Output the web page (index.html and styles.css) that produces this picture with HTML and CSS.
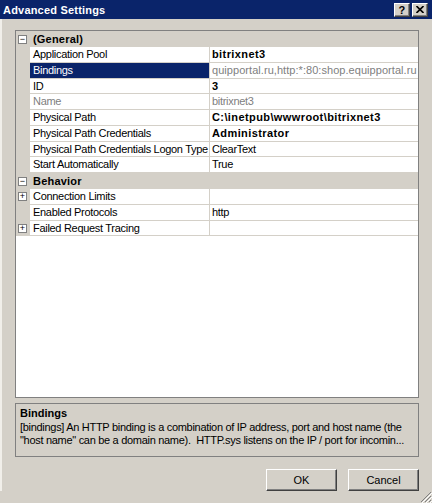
FILE: index.html
```html
<!DOCTYPE html>
<html lang="en">
<head>
    <meta charset="UTF-8">
    <title>Advanced Settings</title>
    <link rel="stylesheet" href="styles.css">
</head>
<body>

<div class="window">
    <!-- Barra de título -->
    <div class="titlebar">
        <span class="title">Advanced Settings</span>
        <span class="title-btn help">?</span>
        <span class="title-btn">
            <svg width="8" height="7" viewBox="0 0 8 7"><path d="M0.5 0 L7.5 7 M7.5 0 L0.5 7" stroke="#000" stroke-width="1.6"/></svg>
        </span>
    </div>

    <div class="content">
        <!-- Grade de propriedades -->
        <div class="grid">
            <div class="cat">
                <span class="gutter"><span class="box">&minus;</span></span>
                <span class="cat-name">(General)</span>
            </div>
            <div class="row">
                <span class="gutter"></span>
                <span class="label">Application Pool</span>
                <span class="value bold">bitrixnet3</span>
            </div>
            <div class="row">
                <span class="gutter"></span>
                <span class="label selected">Bindings</span>
                <span class="value muted wide">quipportal.ru,http:*:80:shop.equipportal.ru</span>
            </div>
            <div class="row">
                <span class="gutter"></span>
                <span class="label">ID</span>
                <span class="value bold">3</span>
            </div>
            <div class="row">
                <span class="gutter"></span>
                <span class="label muted">Name</span>
                <span class="value muted">bitrixnet3</span>
            </div>
            <div class="row">
                <span class="gutter"></span>
                <span class="label">Physical Path</span>
                <span class="value bold">C:\inetpub\wwwroot\bitrixnet3</span>
            </div>
            <div class="row">
                <span class="gutter"></span>
                <span class="label">Physical Path Credentials</span>
                <span class="value bold">Administrator</span>
            </div>
            <div class="row">
                <span class="gutter"></span>
                <span class="label">Physical Path Credentials Logon Type</span>
                <span class="value">ClearText</span>
            </div>
            <div class="row">
                <span class="gutter"></span>
                <span class="label">Start Automatically</span>
                <span class="value">True</span>
            </div>
            <div class="cat">
                <span class="gutter"><span class="box">&minus;</span></span>
                <span class="cat-name">Behavior</span>
            </div>
            <div class="row">
                <span class="gutter"><span class="box">+</span></span>
                <span class="label">Connection Limits</span>
                <span class="value"></span>
            </div>
            <div class="row">
                <span class="gutter"></span>
                <span class="label">Enabled Protocols</span>
                <span class="value">http</span>
            </div>
            <div class="row">
                <span class="gutter"><span class="box">+</span></span>
                <span class="label">Failed Request Tracing</span>
                <span class="value"></span>
            </div>
        </div>

        <!-- Descrição da propriedade -->
        <div class="desc">
            <div class="desc-title">Bindings</div>
            [bindings] An HTTP binding is a combination of IP address, port and host name (the<br>
            "host name" can be a domain name).&nbsp; HTTP.sys listens on the IP / port for incomin...
        </div>

        <div class="actions">
            <button class="btn">OK</button>
            <button class="btn">Cancel</button>
        </div>
    </div>

    <svg class="grip" width="12" height="12" viewBox="0 0 12 12">
        <path d="M11 1 L1 11 M11 5 L5 11 M11 9 L9 11" stroke="#808080" stroke-width="1"/>
        <path d="M12 2 L2 12 M12 6 L6 12 M12 10 L10 12" stroke="#fff" stroke-width="1"/>
    </svg>
</div>

</body>
</html>
```

FILE: styles.css
```css
body {
    margin: 0;
    background-color: #d4d0c8;
    font-family: "Liberation Sans", "DejaVu Sans", sans-serif;
    font-size: 11px;
    letter-spacing: -0.3px;
    color: #000;
}
.window {
    position: relative;
    height: 503px;
    overflow: hidden;
}
/* Barra de título estilo Windows 2000 */
.titlebar {
    height: 19px;
    background-color: #0a246a;
    color: #fff;
    font-weight: bold;
    letter-spacing: 0.2px;
    display: flex;
    align-items: center;
    padding: 0 4px 0 3px;
}
.title {
    flex: 1;
}
.title-btn {
    width: 16px;
    height: 14px;
    box-sizing: border-box;
    background-color: #d4d0c8;
    border: 1px solid;
    border-color: #fff #404040 #404040 #fff;
    box-shadow: inset -1px -1px #808080;
    display: flex;
    align-items: center;
    justify-content: center;
    color: #000;
    font-size: 11px;
    font-weight: bold;
}
.title-btn + .title-btn {
    margin-left: 2px;
}
.content {
    border-left: 2px solid #f1efea;
    padding: 11px 13px 0 13px;
}
.grid {
    height: 368px;
    box-sizing: border-box;
    border: 1px solid #808080;
    background-color: #fff;
    overflow: hidden;
}
.cat {
    display: flex;
    height: 16px;
    line-height: 16px;
    background-color: #d4d0c8;
    font-weight: bold;
    letter-spacing: 0.2px;
}
.cat-name {
    padding-left: 3px;
}
.row {
    display: grid;
    grid-template-columns: 14px 180px 1fr;
    height: 15.75px;
    line-height: 15px;
}
.gutter {
    width: 14px;
    background-color: #d4d0c8;
    display: flex;
    align-items: center;
}
.box {
    width: 9px;
    height: 9px;
    box-sizing: border-box;
    margin-left: 2px;
    border: 1px solid #808080;
    background-color: #fff;
    display: flex;
    align-items: center;
    justify-content: center;
    font-size: 9px;
    line-height: 7px;
    font-weight: normal;
    letter-spacing: 0;
    color: #000;
}
.label, .value {
    border-bottom: 1px solid #d4d0c8;
    white-space: nowrap;
    overflow: hidden;
}
.label {
    padding-left: 3px;
    border-right: 1px solid #d4d0c8;
}
.value {
    padding-left: 2px;
}
.selected {
    background-color: #0a246a;
    color: #fff;
}
.bold {
    font-weight: bold;
    letter-spacing: 0.4px;
}
.muted {
    color: #808080;
}
.wide {
    letter-spacing: 0.05px;
}
.desc {
    margin-top: 5px;
    height: 54px;
    box-sizing: border-box;
    border: 1px solid #808080;
    padding: 3px 4px;
    line-height: 13px;
    white-space: nowrap;
    overflow: hidden;
}
.desc-title {
    font-weight: bold;
    letter-spacing: 0;
    margin-bottom: 1px;
}
.actions {
    display: flex;
    justify-content: flex-end;
    gap: 11px;
    margin-top: 12px;
}
.btn {
    width: 71px;
    height: 22px;
    background-color: #d4d0c8;
    border: 1px solid;
    border-color: #fff #404040 #404040 #fff;
    box-shadow: inset -1px -1px #808080;
    font-family: inherit;
    font-size: 11px;
    color: #000;
    padding: 0;
}
.grip {
    position: absolute;
    right: 0;
    bottom: 0;
}
```
